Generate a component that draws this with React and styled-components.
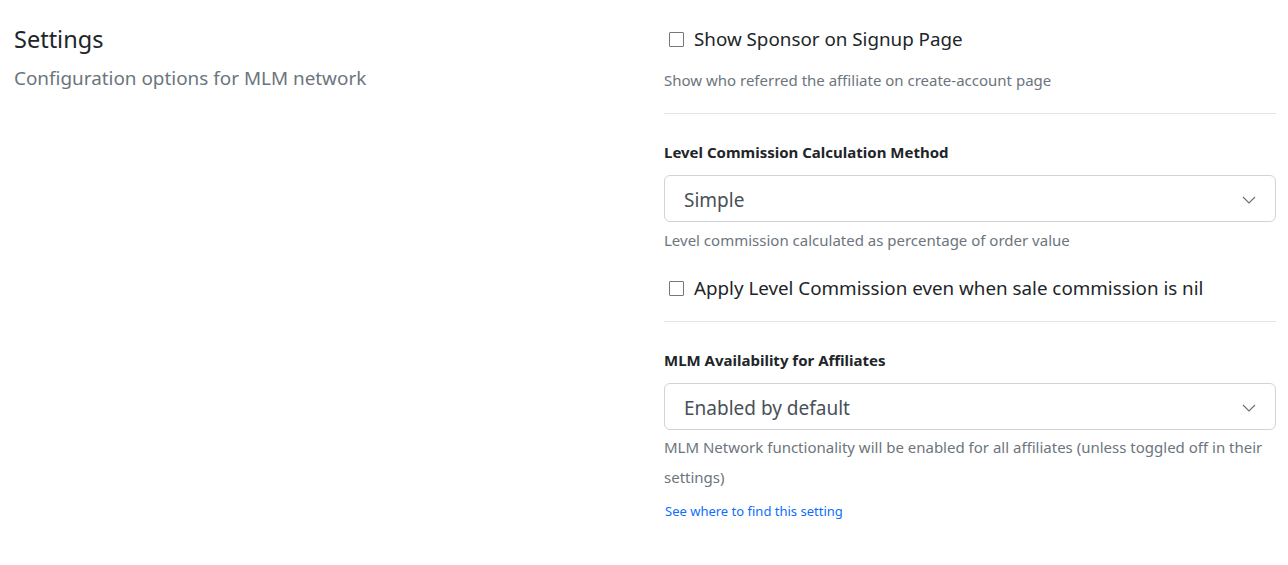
import React from "react";
import styled, { createGlobalStyle } from "styled-components";

const GlobalStyle = createGlobalStyle`
  body {
    margin: 0;
    background: #fff;
    font-family: "Noto Sans", "Open Sans", Arial, sans-serif;
    color: #212529;
  }
`;

const Page = styled.div`
  display: grid;
  grid-template-columns: 1fr 612px;
  column-gap: 38px;
  padding: 18px 12px 30px 14px;
`;

const Intro = styled.div`
  display: flex;
  flex-direction: column;
`;

const Title = styled.h2`
  margin: 6px 0 0;
  font-size: 23.5px;
  font-weight: 400;
  line-height: 30px;
  color: #212529;
`;

const Subtitle = styled.p`
  margin: 11px 0 0;
  font-size: 18.9px;
  line-height: 26px;
  color: #6c757d;
`;

const Form = styled.div`
  display: flex;
  flex-direction: column;
`;

const CheckRow = styled.label`
  display: flex;
  align-items: center;
  gap: 10px;
  padding-left: 5px;
  font-size: 18.8px;
  line-height: 30px;
  color: #212529;
  margin-top: ${(p) => p.$top || 0}px;
`;

const Box = styled.input.attrs({ type: "checkbox" })`
  appearance: none;
  margin: 0;
  width: 15px;
  height: 15px;
  border: 1px solid #767676;
  border-radius: 1px;
  background: #fff;
`;

const Help = styled.div`
  font-size: 15px;
  line-height: 30px;
  color: #6c757d;
  margin-top: ${(p) => p.$top || 0}px;
`;

const Divider = styled.hr`
  margin: ${(p) => p.$top || 0}px 0 0;
  border: 0;
  border-top: 1px solid #e3e5e7;
`;

const Label = styled.div`
  font-size: 15px;
  font-weight: 700;
  line-height: 20px;
  margin-top: 28px;
  color: #212529;
`;

const Select = styled.div`
  margin-top: 13px;
  height: 47px;
  box-sizing: border-box;
  border: 1px solid #ced4da;
  border-radius: 6px;
  display: flex;
  align-items: center;
  justify-content: space-between;
  padding: 2px 19px 0 19px;
  font-size: 19px;
  color: #495057;
`;

const Link = styled.a`
  font-size: 13px;
  line-height: 20px;
  color: #0d6efd;
  text-decoration: none;
  margin-top: 9px;
  padding-left: 1px;
`;

const Chevron = () => (
  <svg width="14" height="8" viewBox="0 0 14 8" fill="none">
    <path d="M1 1l6 6 6-6" stroke="#6b6f73" strokeWidth="1.2" />
  </svg>
);

export default function App() {
  return (
    <>
      <GlobalStyle />
      <Page>
        <Intro>
          <Title>Settings</Title>
          <Subtitle>Configuration options for MLM network</Subtitle>
        </Intro>
        <Form>
          <CheckRow $top={6}>
            <Box />
            Show Sponsor on Signup Page
          </CheckRow>
          <Help $top={11}>Show who referred the affiliate on create-account page</Help>
          <Divider $top={18} />
          <Label>Level Commission Calculation Method</Label>
          <Select>
            <span>Simple</span>
            <Chevron />
          </Select>
          <Help $top={3}>Level commission calculated as percentage of order value</Help>
          <CheckRow $top={18}>
            <Box />
            Apply Level Commission even when sale commission is nil
          </CheckRow>
          <Divider $top={18} />
          <Label>MLM Availability for Affiliates</Label>
          <Select>
            <span>Enabled by default</span>
            <Chevron />
          </Select>
          <Help $top={2}>
            MLM Network functionality will be enabled for all affiliates (unless toggled off in their settings)
          </Help>
          <Link href="#">See where to find this setting</Link>
        </Form>
      </Page>
    </>
  );
}
